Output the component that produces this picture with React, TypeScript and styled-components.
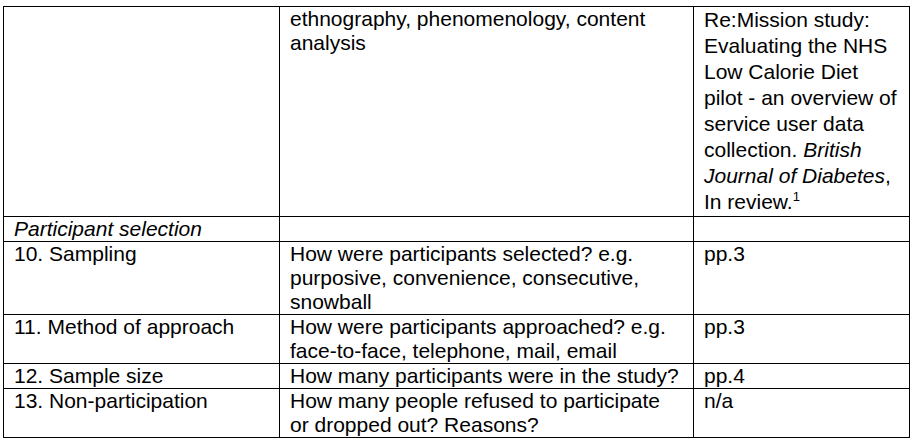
import styled, { createGlobalStyle } from 'styled-components';

const GlobalStyle = createGlobalStyle`
    html, body {
        margin: 0;
        background: #fff;
    }
    body {
        padding: 6px 0 0 3px;
        font-family: "Liberation Sans", Arial, sans-serif;
        color: #000;
    }
`;

const ChecklistTable = styled.table`
    border-collapse: collapse;
    table-layout: fixed;
    width: 906px;
    font-size: 21px;
    line-height: 24px;
`;

const Cell = styled.td<{ $loose?: boolean; $italic?: boolean }>`
    border: 1px solid #000;
    padding: 0 10px;
    vertical-align: top;
    white-space: nowrap;
    line-height: ${(p) => (p.$loose ? '26px' : '24px')};
    font-style: ${(p) => (p.$italic ? 'italic' : 'normal')};
    padding-bottom: ${(p) => (p.$loose ? '1px' : '0')};
`;

const Ref = styled.em`
    font-style: italic;
`;

const Sup = styled.sup`
    font-size: 13px;
    line-height: 0;
    vertical-align: 8px;
`;

const rows = [
    {
        item: '10. Sampling',
        guide: ['How were participants selected? e.g.', 'purposive, convenience, consecutive,', 'snowball'],
        page: 'pp.3',
    },
    {
        item: '11. Method of approach',
        guide: ['How were participants approached? e.g.', 'face-to-face, telephone, mail, email'],
        page: 'pp.3',
    },
    {
        item: '12. Sample size',
        guide: ['How many participants were in the study?'],
        page: 'pp.4',
    },
    {
        item: '13. Non-participation',
        guide: ['How many people refused to participate', 'or dropped out? Reasons?'],
        page: 'n/a',
    },
];

const lines = (text: string[]) =>
    text.map((t, i) => (
        <span key={i}>
            {i > 0 && <br />}
            {t}
        </span>
    ));

export default function App() {
    return (
        <>
            <GlobalStyle />
            <ChecklistTable>
                <colgroup>
                    <col style={{ width: 276 }} />
                    <col style={{ width: 414 }} />
                    <col style={{ width: 216 }} />
                </colgroup>
                <tbody>
                    <tr>
                        <Cell />
                        <Cell>
                            ethnography, phenomenology, content
                            <br />
                            analysis
                        </Cell>
                        <Cell $loose>
                            Re:Mission study:
                            <br />
                            Evaluating the NHS
                            <br />
                            Low Calorie Diet
                            <br />
                            pilot - an overview of
                            <br />
                            service user data
                            <br />
                            collection. <Ref>British</Ref>
                            <br />
                            <Ref>Journal of Diabetes</Ref>,
                            <br />
                            In review.<Sup>1</Sup>
                        </Cell>
                    </tr>
                    <tr>
                        <Cell $italic>Participant selection</Cell>
                        <Cell />
                        <Cell />
                    </tr>
                    {rows.map((r) => (
                        <tr key={r.item}>
                            <Cell>{r.item}</Cell>
                            <Cell>{lines(r.guide)}</Cell>
                            <Cell>{r.page}</Cell>
                        </tr>
                    ))}
                </tbody>
            </ChecklistTable>
        </>
    );
}
